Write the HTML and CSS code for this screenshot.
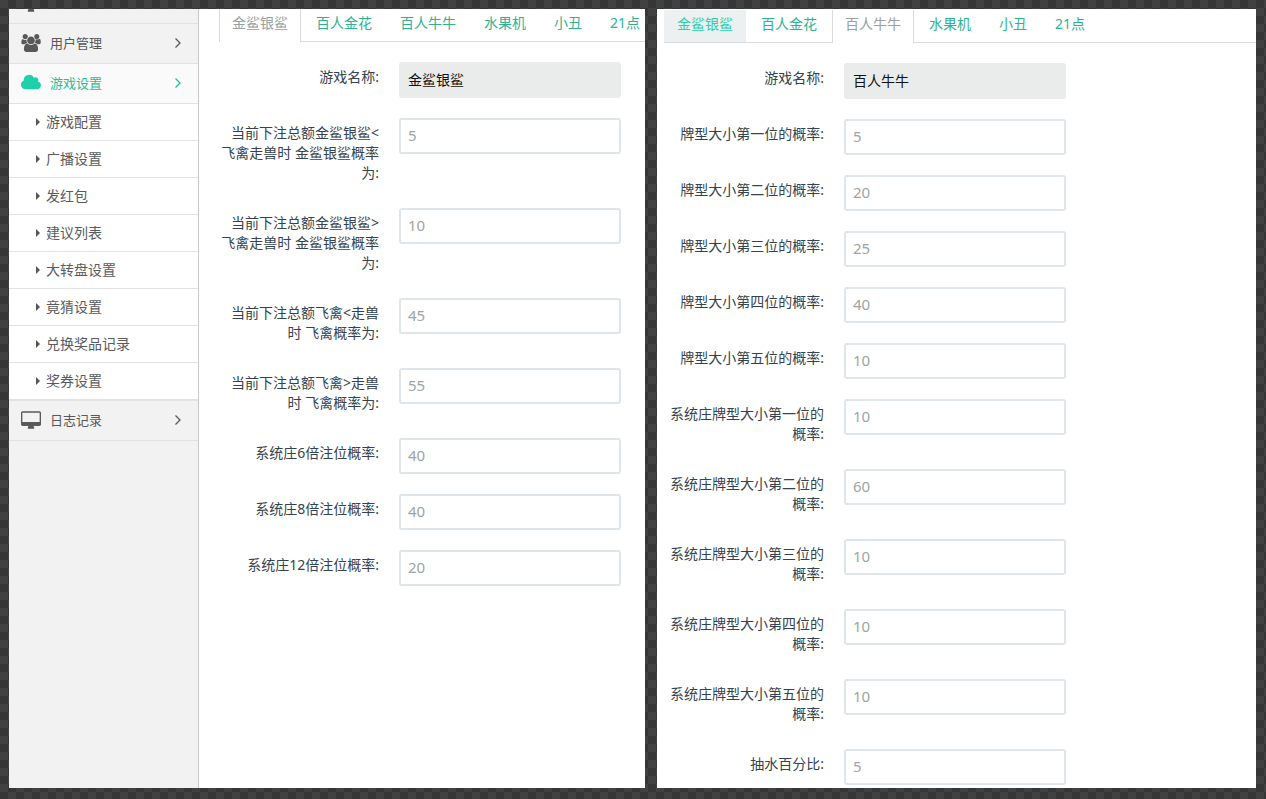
FILE: index.html
```html
<!DOCTYPE html>
<html lang="zh-CN">
<head>
<meta charset="utf-8">
<meta name="viewport" content="width=device-width, initial-scale=1">
<title>游戏设置</title>
<link rel="stylesheet" href="styles.css">
</head>
<body>
<svg class="symbols" aria-hidden="true">
  <symbol id="i-users" viewBox="0 0 1920 1792"><path d="M593 896q-162 5-265 128h-134q-82 0-138-40.5t-56-118.5q0-353 124-353 6 0 43.5 21t97.5 42.5 119 21.5q67 0 133-23-5 37-5 66 0 159 93 300zm1071 637q0 120-73 189.5t-194 69.5h-874q-121 0-194-69.5t-73-189.5q0-53 3.5-103.5t14-109 26.5-108.5 43-97.5 62-81 85.5-53.5 111.5-20q10 0 43 21.5t73 48 107 48 135 21.5 135-21.5 107-48 73-48 43-21.5q61 0 111.5 20t85.5 53.5 62 81 43 97.5 26.5 108.5 14 109 3.5 103.5zm-1024-1277q0 106-75 181t-181 75-181-75-75-181 75-181 181-75 181 75 75 181zm704 384q0 159-112.5 271.5t-271.5 112.5-271.5-112.5-112.5-271.5 112.5-271.5 271.5-112.5 271.5 112.5 112.5 271.5zm576 225q0 78-56 118.5t-138 40.5h-134q-103-123-265-128 93-141 93-300 0-29-5-66 66 23 133 23 59 0 119-21.5t97.5-42.5 43.5-21q124 0 124 353zm-128-609q0 106-75 181t-181 75-181-75-75-181 75-181 181-75 181 75 75 181z"/></symbol>
  <symbol id="i-cloud" viewBox="64 100 1920 1664"><path d="M1984 1152q0 159-112.5 271.5t-271.5 112.5h-1088q-185 0-316.5-131.5t-131.5-316.5q0-132 71-241.5t187-163.5q-2-28-2-43 0-212 150-362t362-150q158 0 286.5 88t187.5 230q70-62 166-62 106 0 181 75t75 181q0 75-41 138 129 30 213 134.5t84 239.5z"/></symbol>
  <symbol id="i-desktop" viewBox="-64 0 1920 1664"><path d="M1728 992v-832q0-13-9.500-22.500t-22.500-9.500h-1600q-13 0-22.500 9.500t-9.500 22.500v832q0 13 9.500 22.500t22.500 9.500h1600q13 0 22.500-9.500t9.500-22.500zm128-832v1088q0 66-47 113t-113 47h-544q0 37 16 77.500t32 71 16 43.500q0 26-19 45t-45 19h-512q-26 0-45-19t-19-45q0-14 16-44t32-70 16-78h-544q-66 0-113-47t-47-113v-1088q0-66 47-113t113-47h1600q66 0 113 47t47 113z"/></symbol>
  <symbol id="i-chevron" viewBox="0 0 8 12"><path d="M1.500 1.500 6 6 1.500 10.500" fill="none" stroke="currentColor" stroke-width="1.300"/></symbol>
  <symbol id="i-caret" viewBox="0 0 4 8"><path d="M0 0 4 4 0 8z"/></symbol>
</svg>
<div class="board">
  <section class="panel panel-left">
    <nav class="sidebar">
      <a class="item item-first" href="#"><svg class="icon"><use href="#i-desktop"/></svg></a>
      <a class="item" href="#"><svg class="icon"><use href="#i-users"/></svg><span class="name">用户管理</span><svg class="chevron"><use href="#i-chevron"/></svg></a>
      <a class="item item-open" href="#"><svg class="icon"><use href="#i-cloud"/></svg><span class="name">游戏设置</span><svg class="chevron"><use href="#i-chevron"/></svg></a>
      <ul class="submenu">
        <li><a href="#"><svg class="caret"><use href="#i-caret"/></svg>游戏配置</a></li>
        <li><a href="#"><svg class="caret"><use href="#i-caret"/></svg>广播设置</a></li>
        <li><a href="#"><svg class="caret"><use href="#i-caret"/></svg>发红包</a></li>
        <li><a href="#"><svg class="caret"><use href="#i-caret"/></svg>建议列表</a></li>
        <li><a href="#"><svg class="caret"><use href="#i-caret"/></svg>大转盘设置</a></li>
        <li><a href="#"><svg class="caret"><use href="#i-caret"/></svg>竟猜设置</a></li>
        <li><a href="#"><svg class="caret"><use href="#i-caret"/></svg>兑换奖品记录</a></li>
        <li><a href="#"><svg class="caret"><use href="#i-caret"/></svg>奖券设置</a></li>
      </ul>
      <a class="item" href="#"><svg class="icon"><use href="#i-desktop"/></svg><span class="name">日志记录</span><svg class="chevron"><use href="#i-chevron"/></svg></a>
    </nav>
    <div class="content">
      <nav class="tabs">
        <a class="tab active" href="#">金鲨银鲨</a>
        <a class="tab" href="#">百人金花</a>
        <a class="tab" href="#">百人牛牛</a>
        <a class="tab" href="#">水果机</a>
        <a class="tab" href="#">小丑</a>
        <a class="tab" href="#">21点</a>
      </nav>
      <form class="form">
        <div class="row"><label for="a0">游戏名称:</label><input id="a0" value="金鲨银鲨" readonly></div>
        <div class="row"><label for="a1">当前下注总额金鲨银鲨&lt; 飞禽走兽时 金鲨银鲨概率为:</label><input id="a1" value="5"></div>
        <div class="row"><label for="a2">当前下注总额金鲨银鲨&gt; 飞禽走兽时 金鲨银鲨概率为:</label><input id="a2" value="10"></div>
        <div class="row"><label for="a3">当前下注总额飞禽&lt;走兽时 飞禽概率为:</label><input id="a3" value="45"></div>
        <div class="row"><label for="a4">当前下注总额飞禽&gt;走兽时 飞禽概率为:</label><input id="a4" value="55"></div>
        <div class="row"><label for="a5">系统庄6倍注位概率:</label><input id="a5" value="40"></div>
        <div class="row"><label for="a6">系统庄8倍注位概率:</label><input id="a6" value="40"></div>
        <div class="row"><label for="a7">系统庄12倍注位概率:</label><input id="a7" value="20"></div>
      </form>
    </div>
  </section>
  <section class="panel panel-right">
    <div class="content">
      <nav class="tabs">
        <a class="tab hovered" href="#">金鲨银鲨</a>
        <a class="tab" href="#">百人金花</a>
        <a class="tab active" href="#">百人牛牛</a>
        <a class="tab" href="#">水果机</a>
        <a class="tab" href="#">小丑</a>
        <a class="tab" href="#">21点</a>
      </nav>
      <form class="form">
        <div class="row"><label for="b0">游戏名称:</label><input id="b0" value="百人牛牛" readonly></div>
        <div class="row"><label for="b1">牌型大小第一位的概率:</label><input id="b1" value="5"></div>
        <div class="row"><label for="b2">牌型大小第二位的概率:</label><input id="b2" value="20"></div>
        <div class="row"><label for="b3">牌型大小第三位的概率:</label><input id="b3" value="25"></div>
        <div class="row"><label for="b4">牌型大小第四位的概率:</label><input id="b4" value="40"></div>
        <div class="row"><label for="b5">牌型大小第五位的概率:</label><input id="b5" value="10"></div>
        <div class="row"><label for="b6">系统庄牌型大小第一位的概率:</label><input id="b6" value="10"></div>
        <div class="row"><label for="b7">系统庄牌型大小第二位的概率:</label><input id="b7" value="60"></div>
        <div class="row"><label for="b8">系统庄牌型大小第三位的概率:</label><input id="b8" value="10"></div>
        <div class="row"><label for="b9">系统庄牌型大小第四位的概率:</label><input id="b9" value="10"></div>
        <div class="row"><label for="b10">系统庄牌型大小第五位的概率:</label><input id="b10" value="10"></div>
        <div class="row"><label for="b11">抽水百分比:</label><input id="b11" value="5"></div>
      </form>
    </div>
  </section>
</div>
</body>
</html>
```
FILE: styles.css
```css
* { box-sizing: border-box; }

body {
  margin: 0;
  font: 14px/20px "Noto Sans", "Noto Sans CJK SC", sans-serif;
  color: #34434f;
  background: repeating-conic-gradient(#363636 0 25%, #414141 0 50%) 0 0 / 16px 16px;
}

.symbols { display: none; }

.board {
  display: grid;
  grid-template-columns: 636fr 599fr;
  gap: 12px;
  min-height: 100vh;
  padding: 9px 10px 11px 9px;
}

.panel {
  display: flex;
  min-width: 0;
  overflow: hidden;
  background: #fff;
}

.sidebar {
  flex: 0 0 190px;
  background: #f2f2f2;
  border-right: 1px solid #c8c8c8;
}

.item {
  display: flex;
  align-items: center;
  height: 40px;
  padding: 0 16px 1px 12px;
  border-bottom: 1px solid #e1e1e1;
  color: #585858;
  font-size: 13px;
  text-decoration: none;
}

.item-first { margin-top: -25px; }
.item-open { background: #fafafa; color: #27bd98; }
.item-open .icon { color: #1fd1ab; }
.name { flex: 1; margin-left: 9px; }
.icon { width: 20px; height: 18px; fill: currentColor; }
.chevron { width: 8px; height: 12px; }

.submenu {
  margin: 0;
  padding: 0;
  list-style: none;
  background: #fff;
  border-bottom: 1px solid #e1e3e1;
}

.submenu a {
  display: flex;
  align-items: center;
  gap: 6px;
  height: 37px;
  padding-left: 27px;
  border-bottom: 1px solid #e1e3e3;
  color: #585c5e;
  text-decoration: none;
}

.caret { width: 4px; height: 8px; fill: #555; }

.content { flex: 1; min-width: 0; }
.panel-left .content { padding-left: 20px; }
.panel-right .content { padding: 1px 0 0 7px; }

.tabs {
  display: flex;
  gap: 2px;
  height: 33px;
  border-bottom: 1px solid #d8dcdc;
}

.tab {
  flex: none;
  height: 33px;
  padding: 4px 12px 8px;
  border: solid transparent;
  border-width: 0 1px;
  color: #2fb292;
  text-decoration: none;
}

.tab.active { background: #fff; border-color: #d8dcdc; color: #96a1a1; }
.tab.hovered { height: 32px; background: #ecf0f1; color: #2fcfa8; }

.form { padding-top: 20px; }

.row {
  display: flex;
  align-items: flex-start;
  gap: 20px;
  margin-bottom: 20px;
}

.row:last-child { margin-bottom: 0; }

label {
  width: 160px;
  margin-bottom: 5px;
  padding-top: 5px;
  text-align: right;
}

input {
  width: 222px;
  height: 36px;
  padding: 0 7px 2px;
  border: 2px solid #dfe5e8;
  border-radius: 3px;
  background: #fff;
  color: #9da5a5;
  font: 15px/20px "Noto Sans", "Noto Sans CJK SC", sans-serif;
}

input:read-only {
  border-color: #eaeceb;
  background: #eaeceb;
  color: #111;
  font-size: 14px;
}
```
